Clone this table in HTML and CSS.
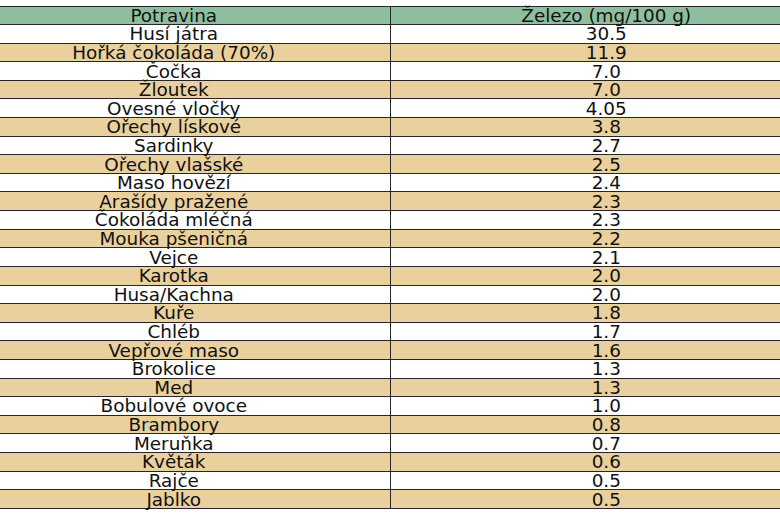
FILE: index.html
```html
<!DOCTYPE html>
<html lang="cs">
<head>
<meta charset="utf-8">
<link rel="stylesheet" href="styles.css">
</head>
<body>
<table class="iron">
<thead>
<tr><th>Potravina</th><th>Železo (mg/100 g)</th></tr>
</thead>
<tbody>
<tr><td>Husí játra</td><td>30.5</td></tr>
<tr class="alt"><td>Hořká čokoláda (70%)</td><td>11.9</td></tr>
<tr><td>Čočka</td><td>7.0</td></tr>
<tr class="alt"><td>Žloutek</td><td>7.0</td></tr>
<tr><td>Ovesné vločky</td><td>4.05</td></tr>
<tr class="alt"><td>Ořechy lískové</td><td>3.8</td></tr>
<tr><td>Sardinky</td><td>2.7</td></tr>
<tr class="alt"><td>Ořechy vlašské</td><td>2.5</td></tr>
<tr><td>Maso hovězí</td><td>2.4</td></tr>
<tr class="alt"><td>Arašídy pražené</td><td>2.3</td></tr>
<tr><td>Čokoláda mléčná</td><td>2.3</td></tr>
<tr class="alt"><td>Mouka pšeničná</td><td>2.2</td></tr>
<tr><td>Vejce</td><td>2.1</td></tr>
<tr class="alt"><td>Karotka</td><td>2.0</td></tr>
<tr><td>Husa/Kachna</td><td>2.0</td></tr>
<tr class="alt"><td>Kuře</td><td>1.8</td></tr>
<tr><td>Chléb</td><td>1.7</td></tr>
<tr class="alt"><td>Vepřové maso</td><td>1.6</td></tr>
<tr><td>Brokolice</td><td>1.3</td></tr>
<tr class="alt"><td>Med</td><td>1.3</td></tr>
<tr><td>Bobulové ovoce</td><td>1.0</td></tr>
<tr class="alt"><td>Brambory</td><td>0.8</td></tr>
<tr><td>Meruňka</td><td>0.7</td></tr>
<tr class="alt"><td>Květák</td><td>0.6</td></tr>
<tr><td>Rajče</td><td>0.5</td></tr>
<tr class="alt"><td>Jablko</td><td>0.5</td></tr>
</tbody>
</table>
</body>
</html>
```

FILE: styles.css
```css
html, body {
  margin: 0;
  padding: 0;
  background: #ffffff;
}
body {
  overflow: hidden;
  width: 780px;
  height: 520px;
}
.iron {
  border-collapse: collapse;
  table-layout: fixed;
  width: 780px;
  height: 503px;
  margin: 6px 0 0 0;
  font-family: "DejaVu Sans", sans-serif;
  font-size: 18.4px;
  color: #111111;
}
.iron th,
.iron td {
  border: 1.5px solid #262626;
  padding: 0;
  text-align: center;
  vertical-align: middle;
  font-weight: normal;
  line-height: 17px;
  white-space: nowrap;
  width: 50%;
}
.iron th:first-child,
.iron td:first-child {
  border-left: none;
  padding-right: 42px;
}
.iron th:last-child,
.iron td:last-child {
  border-right: none;
  padding-left: 42px;
}
.iron thead tr {
  background: #8dbf9f;
}
.iron tr.alt {
  background: #e9d09d;
}
```
